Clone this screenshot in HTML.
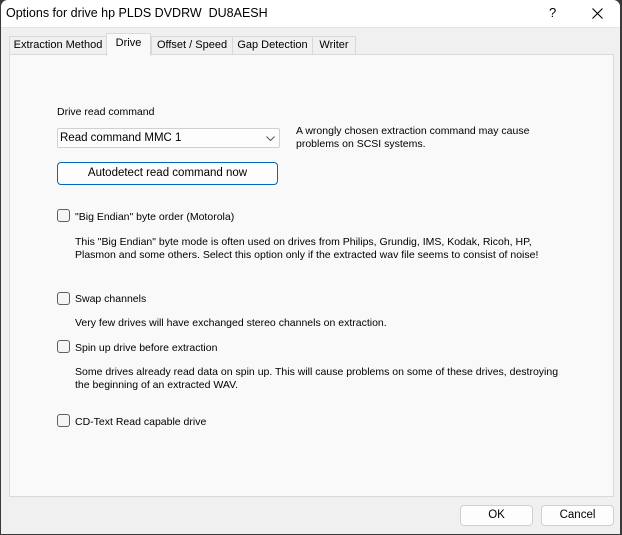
<!DOCTYPE html>
<html><head><style>
body{margin:0;width:622px;height:535px;overflow:hidden;background:#3a3a3a;font-family:"Liberation Sans",sans-serif;font-size:10.5px;color:#000}
#win{position:absolute;left:1px;top:0;width:619px;height:534px;background:#f0f0f0;border-radius:7px 7px 0 0;overflow:hidden}
#title{position:absolute;left:0;top:0;width:619px;height:27px;background:#fff;border-bottom:1px solid #e5e5e5}
.a{position:absolute;white-space:nowrap}
.tab{position:absolute;top:36px;height:17px;border:1px solid #d9d9d9;border-bottom:none;background:#f0f0f0;font-size:11px;text-align:center;line-height:17px;white-space:nowrap}
#panel{position:absolute;left:8px;top:54px;width:603px;height:441px;background:#f9f9f9;border:1px solid #d9d9d9}
.cb{position:absolute;width:11px;height:11px;border:1px solid #5f5f5f;border-radius:3px;background:#f5f5f5}
.btn{position:absolute;background:#fdfdfd;border:1px solid #d0d0d0;border-radius:4px;text-align:center;font-size:11.5px}
</style></head><body>
<div id="win">
<div id="title"><span class="a" style="left:5px;top:6px;font-size:12.5px">Options for drive hp PLDS DVDRW&nbsp; DU8AESH</span>
<span class="a" style="left:548px;top:5px;font-size:13px">?</span>
<svg class="a" style="left:591px;top:8px" width="11" height="11"><path d="M0.5 0.5L10.5 10.5M10.5 0.5L0.5 10.5" stroke="#000" stroke-width="1.1"/></svg>
</div>
<div class="tab" style="left:8px;width:96px">Extraction Method</div>
<div class="tab" style="left:150px;width:80px">Offset / Speed</div>
<div class="tab" style="left:231px;width:79px">Gap Detection</div>
<div class="tab" style="left:311px;width:42px">Writer</div>
<div id="panel"></div>
<div class="tab" style="left:105px;top:33px;height:22px;width:43px;background:#f9f9f9;line-height:19px;z-index:2">Drive</div>
<span class="a" style="left:56px;top:106px">Drive read command</span>
<div class="a" style="left:56px;top:128px;width:221px;height:18px;border:1px solid #d0d0d0;background:#fdfdfd;border-radius:2px"><span class="a" style="left:2px;top:3px;font-size:11.5px">Read command MMC 1</span>
<svg class="a" style="left:208px;top:7px" width="9" height="6"><path d="M0.5 0.5L4.5 4.5L8.5 0.5" stroke="#555" fill="none"/></svg></div>
<span class="a" style="left:295px;top:125px">A wrongly chosen extraction command may cause</span>
<span class="a" style="left:295px;top:138px">problems on SCSI systems.</span>
<div class="btn" style="left:56px;top:162px;width:219px;height:21px;border:1px solid #0067c0;line-height:21px">Autodetect read command now</div>
<div class="cb" style="left:56px;top:209px"></div><span class="a" style="left:74px;top:211px">"Big Endian" byte order (Motorola)</span>
<span class="a" style="left:74px;top:236px">This "Big Endian" byte mode is often used on drives from Philips, Grundig, IMS, Kodak, Ricoh, HP,</span>
<span class="a" style="left:74px;top:249px">Plasmon and some others. Select this option only if the extracted wav file seems to consist of noise!</span>
<div class="cb" style="left:56px;top:292px"></div><span class="a" style="left:74px;top:293px">Swap channels</span>
<span class="a" style="left:74px;top:317px">Very few drives will have exchanged stereo channels on extraction.</span>
<div class="cb" style="left:56px;top:340px"></div><span class="a" style="left:74px;top:342px">Spin up drive before extraction</span>
<span class="a" style="left:74px;top:366px">Some drives already read data on spin up. This will cause problems on some of these drives, destroying</span>
<span class="a" style="left:74px;top:379px">the beginning of an extracted WAV.</span>
<div class="cb" style="left:56px;top:414px"></div><span class="a" style="left:74px;top:416px">CD-Text Read capable drive</span>
<div class="btn" style="left:459px;top:505px;width:71px;height:19px;line-height:19px">OK</div>
<div class="btn" style="left:540px;top:505px;width:71px;height:19px;line-height:19px">Cancel</div>
</div>
</body></html>
